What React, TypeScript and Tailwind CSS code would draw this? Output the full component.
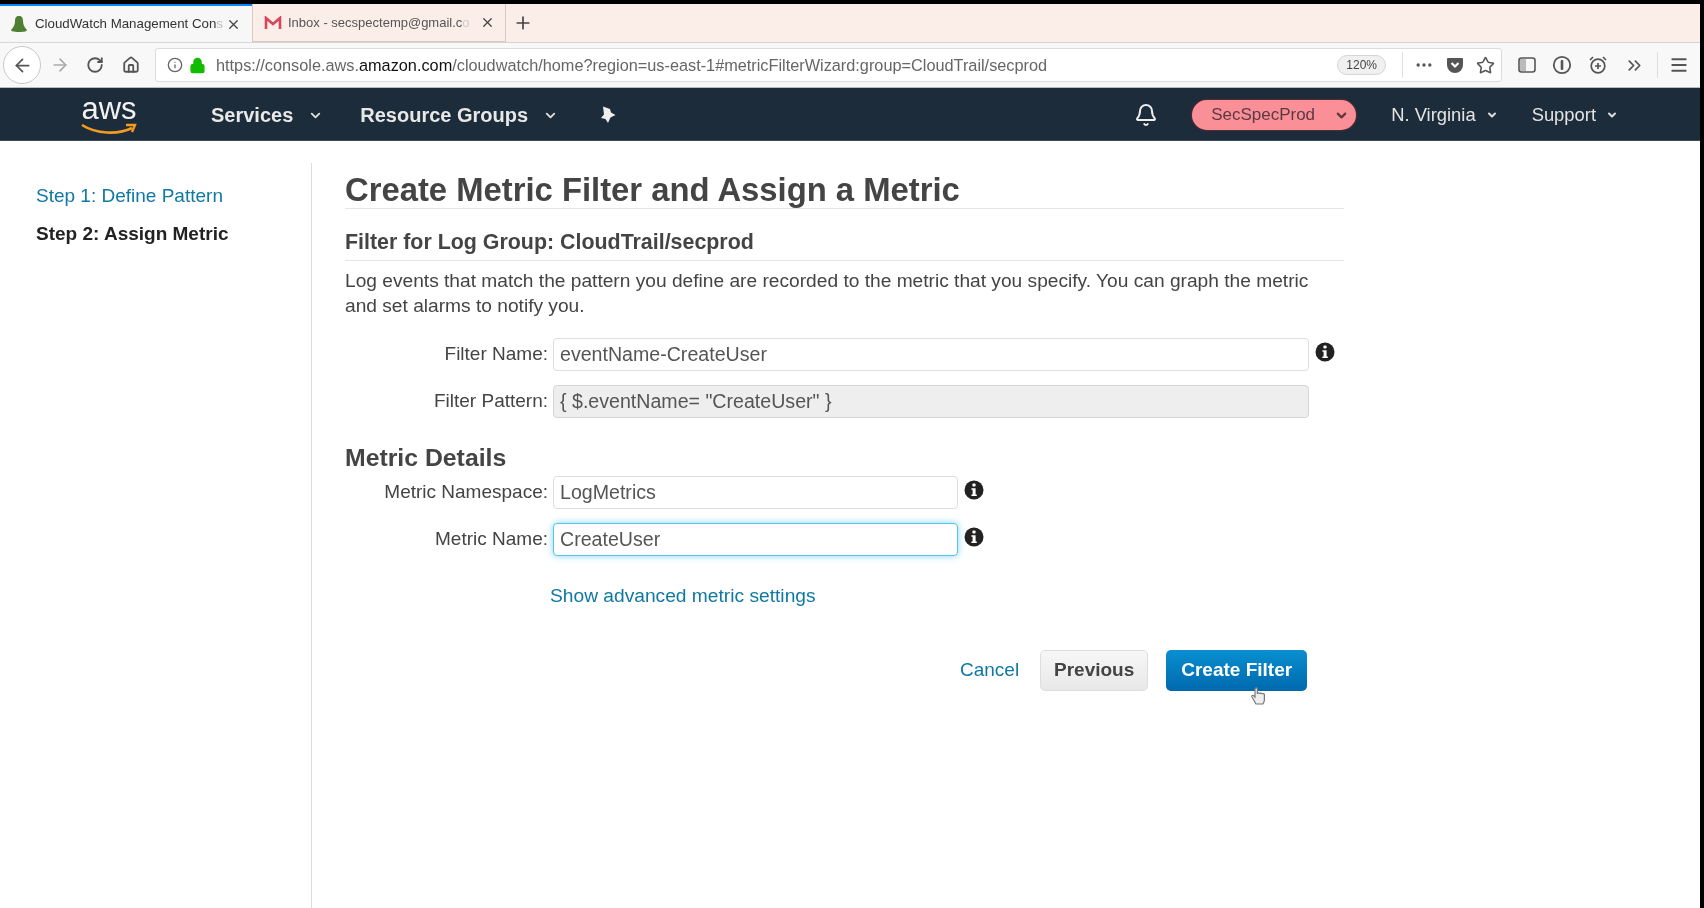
import { ChevronDown, Info, Lock, Star, ArrowLeft, ArrowRight, RotateCw, Home, X, Plus, Bell, Menu, ChevronsRight, MoreHorizontal } from "lucide-react"

function InfoDot() {
  return (
    <svg width="20" height="20" viewBox="0 0 20 20" className="shrink-0">
      <circle cx="10" cy="10" r="9.5" fill="#222" />
      <rect x="8.4" y="3.6" width="3.2" height="3" rx="1" fill="#fff" />
      <path d="M7.4 8.2h4.2v6.2h1.2v1.6H7.4v-1.6h1.2V9.8H7.4z" fill="#fff" />
    </svg>
  )
}

function FormRow({ label, value, inputWidth, className, disabled, focused, info }: {
  label: string
  value: string
  inputWidth: string
  className?: string
  disabled?: boolean
  focused?: boolean
  info?: boolean
}) {
  return (
    <div className={`flex items-center ${className ?? ""}`}>
      <label className="w-[209px] shrink-0 pr-[5px] text-right text-[19px] text-[#444]">{label}</label>
      <div
        className={`${inputWidth} flex h-[33px] items-center rounded-[4px] border px-[6px] text-[19.6px] text-[#555] ${
          disabled
            ? "border-[#d5d5d5] bg-[#eeeeee]"
            : focused
              ? "border-[#5cc3e8] bg-white shadow-[0_0_7px_#7fd6f5]"
              : "border-[#dddddd] bg-white"
        }`}
      >
        {value}
      </div>
      {info && <div className="ml-[6px] -mt-[6px]"><InfoDot /></div>}
    </div>
  )
}

export default function App() {
  return (
    <div className="flex h-[908px] w-[1704px] flex-col overflow-hidden bg-black blur-[0.35px] font-['Liberation_Sans',Arial,sans-serif]">
      {/* Tabs */}
      <div className="mt-[4px] flex h-[38px] w-[1700px] shrink-0 items-stretch bg-[#fbeee9]">
        <div className="flex w-[252px] items-center border-t-2 border-[#0a84ff] bg-[#f7f7f7] pl-[10px] text-[13.3px] text-[#333]">
          <svg width="18" height="18" viewBox="0 0 18 18" className="shrink-0">
            <path d="M9 1c3 0 4 2 4 5 0 3 1 6 4 9 0 1-2 2-8 2s-8-1-8-2c3-3 4-6 4-9 0-3 1-5 4-5z" fill="#4f7f34" />
          </svg>
          <span className="ml-[7px] w-[189px] whitespace-nowrap">CloudWatch Management Con<span className="text-[#bbb]">s</span></span>
          <X size={15} className="ml-[2px] text-[#444]" />
        </div>
        <div className="flex w-[254px] items-center border-x border-b border-[#d9c7c2] pl-[11px] text-[13px] text-[#555]">
          <svg width="18" height="14" viewBox="0 0 18 14" className="shrink-0">
            <path d="M2 13V2l7 6 7-6v11" fill="none" stroke="#d9455b" strokeWidth="2.6" />
          </svg>
          <span className="ml-[6px] w-[187px] whitespace-nowrap">Inbox - secspectemp@gmail.c<span className="text-[#ccc]">o</span></span>
          <X size={15} className="ml-[5px] text-[#444]" />
        </div>
        <div className="flex w-[34px] items-center justify-center text-[#444]">
          <Plus size={20} />
        </div>
      </div>

      {/* Toolbar */}
      <div className="flex h-[46px] w-[1700px] shrink-0 items-center border-b border-[#bbbbbb] border-t border-t-[#d5d5d5] bg-[#f8f8f8] pl-[3px] text-[#555]">
        <div className="flex h-[38px] w-[38px] items-center justify-center rounded-full border border-[#c8c8c8] bg-white">
          <ArrowLeft size={21} />
        </div>
        <ArrowRight size={20} className="ml-[9px] text-[#aaa]" />
        <RotateCw size={18} strokeWidth={2.4} className="ml-[16px]" />
        <Home size={18} strokeWidth={2.4} className="ml-[18px]" />
        <div className="ml-[15px] flex h-[34px] w-[1347px] items-center rounded-[3px] border border-[#dcdcdc] bg-white pl-[11px]">
          <Info size={16} className="text-[#666]" />
          <Lock size={17} fill="#12bc00" className="ml-[6px] text-[#12bc00]" />
          <span className="ml-[10px] text-[16.3px] text-[#666]">
            https://console.aws.<span className="text-[#111]">amazon.com</span>/cloudwatch/home?region=us-east-1#metricFilterWizard:group=CloudTrail/secprod
          </span>
          <span className="ml-auto rounded-full border border-[#d5d5d5] bg-[#f0f0f0] px-[8px] text-[12px] text-[#444]">120%</span>
          <div className="ml-[16px] h-[26px] w-px bg-[#e0e0e0]" />
          <MoreHorizontal size={20} className="ml-[11px]" />
          <svg width="18" height="18" viewBox="0 0 18 18" className="ml-[12px]">
            <path d="M2 2h14a1 1 0 0 1 1 1v6a8 8 0 0 1-16 0V3a1 1 0 0 1 1-1z" fill="#555" />
            <path d="M5.5 7 9 10.5 12.5 7" fill="none" stroke="#fff" strokeWidth="2.2" />
          </svg>
          <Star size={19} className="ml-[12px] mr-[6px]" />
        </div>
        <svg width="18" height="16" viewBox="0 0 18 16" className="ml-[16px]">
          <rect x="1" y="1" width="16" height="14" rx="2.5" fill="none" stroke="#555" strokeWidth="1.6" />
          <rect x="2" y="2" width="6" height="12" fill="#bbb" />
        </svg>
        <svg width="20" height="20" viewBox="0 0 20 20" className="ml-[16px]">
          <circle cx="10" cy="10" r="8.2" fill="none" stroke="#555" strokeWidth="1.8" />
          <rect x="8.7" y="5" width="2.6" height="10" rx="1" fill="#555" />
        </svg>
        <svg width="20" height="20" viewBox="0 0 20 20" className="ml-[16px]">
          <circle cx="10" cy="11" r="6.8" fill="none" stroke="#555" strokeWidth="1.7" />
          <path d="M10 8v6M7 11h6M2 5l3-3M18 5l-3-3" fill="none" stroke="#555" strokeWidth="1.7" />
        </svg>
        <ChevronsRight size={21} className="ml-[16px]" />
        <div className="ml-[12px] h-[26px] w-px bg-[#dddddd]" />
        <Menu size={20} strokeWidth={2.4} className="ml-[11px]" />
      </div>

      {/* AWS nav */}
      <div className="flex h-[53px] w-[1700px] shrink-0 items-center border-b border-[#3a4a58] bg-[#1d2c3a] pt-[2px] text-white">
        <div className="ml-[80px] flex w-[58px] flex-col items-center">
          <span className="h-[28px] text-[31px] leading-[26px] text-[#f2f2f2]">aws</span>
          <svg width="56" height="12" viewBox="0 0 56 12" className="-mt-[1px]">
            <path d="M1 2c14 9 36 10 50 3" fill="none" stroke="#f59b21" strokeWidth="2.6" />
            <path d="M45 2l9 0-3 7" fill="none" stroke="#f59b21" strokeWidth="2.4" />
          </svg>
        </div>
        <span className="ml-[73px] text-[20px] font-bold text-[#e8e8e8]">Services</span>
        <ChevronDown size={15} strokeWidth={3} className="ml-[15px] text-[#ddd]" />
        <span className="ml-[37px] text-[20px] font-bold text-[#e8e8e8]">Resource Groups</span>
        <ChevronDown size={15} strokeWidth={3} className="ml-[15px] text-[#ddd]" />
        <svg width="20" height="20" viewBox="0 0 20 20" className="ml-[40px]">
          <path d="M5 1.5l7 2.500 1 3.500 4.500 2.500-5 2.500-2.500 5.500-2.500-4-4.500-1 3-3.500z" fill="#eee" />
        </svg>
        <Bell size={24} className="ml-[516px] text-[#eee]" />
        <div className="ml-[34px] flex h-[30px] w-[164px] items-center rounded-full bg-[#fb8f98] pl-[19px] text-[17px] text-[#5a3a40] shadow-[0_0_2px_#b33]">
          SecSpecProd
          <ChevronDown size={15} strokeWidth={3.5} className="ml-[19px]" />
        </div>
        <span className="ml-[35px] text-[18.4px] text-[#e4e4e4]">N. Virginia</span>
        <ChevronDown size={12} strokeWidth={4} className="ml-[10px] text-[#ddd]" />
        <span className="ml-[34px] text-[18.4px] text-[#e4e4e4]">Support</span>
        <ChevronDown size={12} strokeWidth={4} className="ml-[10px] text-[#ddd]" />
      </div>

      {/* Page */}
      <div className="flex min-h-0 w-[1700px] flex-1 bg-white pt-[22px]">
        <aside className="w-[312px] shrink-0 border-r border-[#dcdcdc] pl-[36px] pt-[19px] text-[19px]">
          <div className="text-[#0f78a3]">Step 1: Define Pattern</div>
          <div className="mt-[9px] font-bold text-[#222]">Step 2: Assign Metric</div>
        </aside>
        <main className="w-[999px] shrink-0 pl-[33px] box-content">
          <h1 className="border-b border-[#e5e5e5] pb-[1px] pt-[9px] text-[32.8px] font-bold leading-[35px] text-[#444]">
            Create Metric Filter and Assign a Metric
          </h1>
          <h2 className="mt-[19px] border-b border-[#e5e5e5] pb-[4px] text-[21.4px] font-bold leading-[28px] text-[#444]">
            Filter for Log Group: CloudTrail/secprod
          </h2>
          <p className="mt-[7px] w-[985px] text-[19.17px] leading-[25px] text-[#444]">
            Log events that match the pattern you define are recorded to the metric that you specify. You can graph the metric and set alarms to notify you.
          </p>
          <FormRow className="mt-[20px] -ml-[1px]" label="Filter Name:" value="eventName-CreateUser" inputWidth="w-[756px]" info />
          <FormRow className="mt-[14px] -ml-[1px]" label="Filter Pattern:" value='{ $.eventName= "CreateUser" }' inputWidth="w-[756px]" disabled />
          <h2 className="mt-[25px] text-[24.8px] font-bold leading-[30px] text-[#444]">Metric Details</h2>
          <FormRow className="mt-[3px] -ml-[1px]" label="Metric Namespace:" value="LogMetrics" inputWidth="w-[405px]" info />
          <FormRow className="mt-[14px] -ml-[1px]" label="Metric Name:" value="CreateUser" inputWidth="w-[405px]" focused info />
          <a className="ml-[205px] mt-[29px] block text-[19.2px] leading-[22px] text-[#0f78a3]">Show advanced metric settings</a>
          <div className="relative ml-[615px] mt-[43px] flex items-center">
            <a className="text-[19px] text-[#0f78a3]">Cancel</a>
            <button className="ml-[21px] h-[41px] w-[108px] rounded-[5px] border border-[#dddddd] bg-gradient-to-b from-[#f7f7f7] to-[#e8e8e8] text-[19px] font-bold text-[#444]">
              Previous
            </button>
            <button className="ml-[18px] h-[41px] w-[141px] rounded-[5px] bg-gradient-to-b from-[#0a8fd0] to-[#0069ad] text-[19px] font-bold text-white">
              Create Filter
            </button>
            <svg width="18" height="20" viewBox="0 0 18 20" className="absolute left-[290px] top-[36px]">
              <path d="M6 18 2 11c-.8-1.5 1-2.4 2-1l1 1V3c0-1.6 2.4-1.6 2.4 0v5c0-1.4 2.4-1.4 2.4 0 0-1.2 2.400-1.200 2.400.3 0-1 2.200-1 2.200.5V14c0 2-1 3-1.600 4z" fill="#eee" stroke="#777" strokeWidth="1.2" />
            </svg>
          </div>
        </main>
      </div>
    </div>
  )
}
